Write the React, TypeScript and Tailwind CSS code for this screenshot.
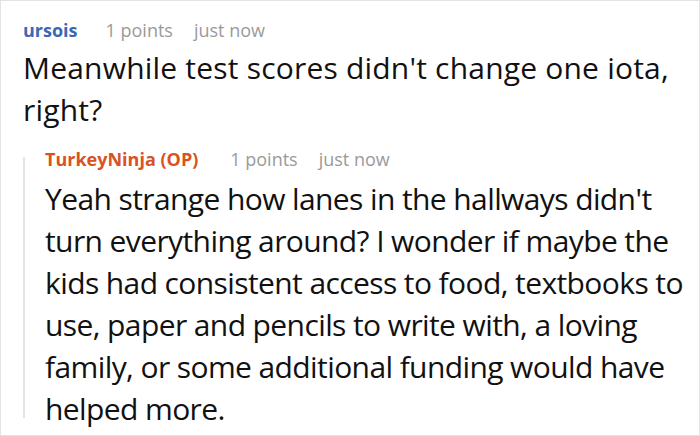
import React from "react";

const Meta: React.FC<{ name: string; nameClass: string; gap: string }> = ({
  name,
  nameClass,
  gap,
}) => (
  <div className="flex items-baseline text-[18px] leading-[24px]">
    <span className={`font-bold ${nameClass}`}>{name}</span>
    <span className={`${gap} text-[#9a9a9a]`}>1 points</span>
    <span className="ml-[21px] text-[#9a9a9a]">just now</span>
  </div>
);

export default function App() {
  return (
    <div
      className="w-[700px] h-[436px] bg-white border border-[#e3e3e3] overflow-hidden"
      style={{ fontFamily: '"Open Sans", "Noto Sans", sans-serif' }}
    >
      <div className="pl-[22px] pt-[17px]">
        <Meta name="ursois" nameClass="text-[#3a68b6]" gap="ml-[28px]" />
        <p className="mt-[5px] text-[30px] leading-[42px] text-[#111] pr-2 tracking-[0.2px]">
          Meanwhile test scores didn't change one iota, right?
        </p>
        <div className="relative mt-[16px] pl-[22px] before:absolute before:left-0 before:top-[10px] before:bottom-[12px] before:w-[2px] before:bg-[#e4e4e4]">
          <Meta
            name="TurkeyNinja (OP)"
            nameClass="text-[#d9531f]"
            gap="ml-[32px]"
          />
          <p className="mt-[7px] text-[30px] leading-[42px] text-[#111] pr-2 tracking-[-0.6px]">
            Yeah strange how lanes in the hallways didn't turn everything
            around? I wonder if maybe the kids had consistent access to food,
            textbooks to use, paper and pencils to write with, a loving family,
            or some additional funding would have helped more.
          </p>
        </div>
      </div>
    </div>
  );
}
